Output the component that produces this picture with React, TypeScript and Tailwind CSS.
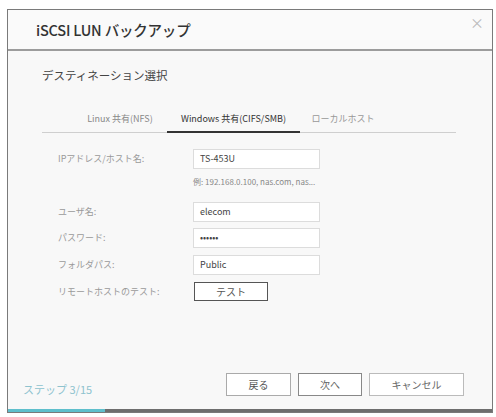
import React from "react";

const font = { fontFamily: '"Noto Sans CJK JP", "Noto Sans", sans-serif' };

const Field = ({ label, value, top }: { label: string; value?: string; top: string }) => (
  <div className={`flex items-center ${top}`}>
    <div className="w-[185px] pl-[50px] text-[9px] text-[#9a9a9a] whitespace-nowrap">{label}</div>
    <div className="w-[127px] h-[20px] bg-white border border-[#dcdcdc] flex items-center pl-[6px] text-[9px] text-[#444]">
      {value}
    </div>
  </div>
);

export default function App() {
  return (
    <div className="w-[496px] h-[417px] bg-white pl-[7px] pt-[9px]" style={font}>
      <div className="relative w-[486px] h-[404px] border border-[#7a7a7a] flex flex-col bg-[#f8f8f8]">
        {/* Header */}
        <div className="h-[41px] bg-[#fafafa] border-b-2 border-[#9c9c9c] flex items-center pl-[28px]">
          <span className="text-[14.5px] font-medium text-[#333] tracking-[-0.2px]">iSCSI LUN バックアップ</span>
          <span className="absolute right-[8px] top-[5px] text-[14px] text-[#bbb] leading-none">×</span>
        </div>

        {/* Body */}
        <div className="flex-1 flex flex-col">
          <div className="pl-[34px] pt-[16px] text-[11.5px] text-[#444] leading-[16px]">デスティネーション選択</div>

          {/* Tabs */}
          <div className="ml-[34px] mt-[30px] w-[414px] flex pl-[31px] border-b border-[#cfcfcf] text-[9px] leading-[12px]">
            <div className="w-[94px] text-center pb-[7px] text-[#888]">Linux 共有(NFS)</div>
            <div className="w-[133px] text-center pb-[6px] text-[#333] border-b-2 border-[#333] -mb-px">Windows 共有(CIFS/SMB)</div>
            <div className="w-[86px] text-center pb-[7px] text-[#999]">ローカルホスト</div>
          </div>

          {/* Form */}
          <Field label="IPアドレス/ホスト名:" value="TS-453U" top="mt-[16px]" />
          <div className="pl-[185px] mt-[7px] text-[8px] text-[#888] leading-[12px]">例: 192.168.0.100, nas.com, nas...</div>
          <Field label="ユーザ名:" value="elecom" top="mt-[14px]" />
          <Field label="パスワード:" value="••••••" top="mt-[6px]" />
          <Field label="フォルダパス:" value="Public" top="mt-[7px]" />
          <div className="flex items-center mt-[7px]">
            <div className="w-[186px] pl-[50px] text-[9px] text-[#9a9a9a] whitespace-nowrap">リモートホストのテスト:</div>
            <button className="w-[74px] h-[19px] bg-white border-[1.5px] border-[#555] text-[10px] text-[#555] flex items-center justify-center">
              テスト
            </button>
          </div>

          {/* Footer */}
          <div className="mt-auto flex items-center pb-[12px] pr-[28px]">
            <div className="pl-[15px] text-[11px] text-[#8ec3cf] flex-1 pt-[8px]">ステップ 3/15</div>
            <div className="flex gap-[7px]">
              <button className="w-[65px] h-[23px] bg-white border border-[#aaa] text-[10px] text-[#555]">戻る</button>
              <button className="w-[64px] h-[23px] bg-white border border-[#888] text-[10px] text-[#666]">次へ</button>
              <button className="w-[95px] h-[23px] bg-white border border-[#bbb] text-[10px] text-[#666]">キャンセル</button>
            </div>
          </div>
        </div>

        {/* Progress */}
        <div className="h-[3px] flex bg-[#6e6e6e]">
          <div className="w-[97px] bg-[#5fbfcc]" />
        </div>
      </div>
    </div>
  );
}
